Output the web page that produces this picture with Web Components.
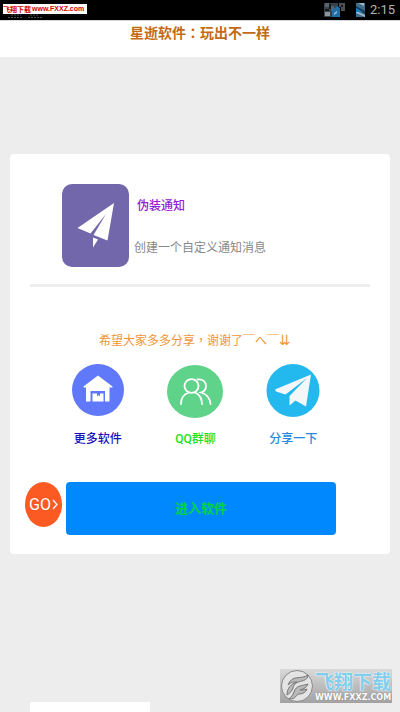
<!DOCTYPE html>
<html lang="zh-CN">
<head>
<meta charset="utf-8">
<meta name="viewport" content="width=device-width, initial-scale=1">
<title>星逝软件</title>
<style>
html, body { margin: 0; height: 100%; }
body { background: #ededed; font-family: Roboto, "Noto Sans CJK SC", sans-serif; font-size: 12px; line-height: 18px; }
.mid { font-family: "Noto Sans CJK TC", sans-serif; }
</style>
</head>
<body>
<star-app></star-app>
<script>
function define(name, html) {
  const template = document.createElement('template');
  template.innerHTML = html;
  customElements.define(name, class extends HTMLElement {
    constructor() {
      super();
      this.attachShadow({ mode: 'open' }).append(template.content.cloneNode(true));
    }
  });
}

define('status-bar', `
<style>
:host { display: flex; align-items: center; justify-content: flex-end; height: 21px; padding: 0 5px; background: #000; color: #b4b4b4; font-size: 13px; border-bottom: 1px solid #d8d8d8; box-sizing: border-box; gap: 5px; position: relative; }
.ghost { position: absolute; left: 8px; top: 14px; }
.notice { margin-right: 5px; }
</style>
<svg class="ghost" width="36" height="5" viewBox="0 0 36 5" fill="none" stroke="#55504d" stroke-dasharray="2 1"><path d="M3 1h10M0 3.5h15M22 1h9M20 3.5h15"/></svg>
<svg class="notice" width="22" height="16" viewBox="0 0 22 16">
<path fill="#35414b" d="M0 1h14v14H0z"/><path fill="#8b969e" d="M1 10h5v4H1z"/><path fill="#59636d" d="M1 1h4v4H1zM7 4h3v5H7z"/><path fill="#1d6fa9" d="M8 8l5-4 3 2v9H8z"/><path fill="#4c5157" d="M15 1h6v8h-4V5h-2z"/><path fill="#15191d" d="M5 2h2v5H5zM1 7h4v2H1zM17 3h2v2h-2z"/><path fill="#93b9d2" d="M10 11l3-2v2l-3 2z"/>
</svg>
<svg width="9" height="14" viewBox="0 0 9 14">
<path fill="#3f6d8c" d="M0 0h9v14H0z"/><path fill="#173b58" d="M0 3l9 5v3L0 6z"/><path fill="#a1bac9" d="M0 8l9 4v2L0 10zM2 0h6v3z"/><path fill="#187fbd" d="M0 5l7 4H0z"/>
</svg>
<time>2:15</time>
`);

define('title-bar', `
<style>
:host { display: block; height: 36px; background: #fff; }
h1 { margin: 0; font-size: 14px; line-height: 22px; font-weight: 700; color: #c46a14; text-align: center; }
</style>
<h1><slot></slot></h1>
`);

define('feature-row', `
<style>
:host { display: flex; gap: 5px; margin: 0 20px; padding: 30px 32px 17px; border-bottom: 3px solid #efefef; }
svg { flex: none; }
div { display: flex; flex-direction: column; gap: 24px; padding-top: 13px; }
h2, p { margin: 0; font-size: 12px; line-height: 18px; }
h2 { font-weight: 500; color: #9420d6; padding-left: 3px; }
p { color: #888; }
</style>
<svg width="67" height="83" viewBox="0 0 67 83" role="img" aria-label="纸飞机">
<rect width="67" height="83" rx="10" fill="#7167aa"/>
<path fill="#fff" d="M52 19L15.500 44 28.500 49.500 44 30 31.500 51 45.500 56.500z"/>
<path fill="#fff" d="M31 53.500L36 55.500 31 63.500z"/>
</svg>
<div><h2><slot name="title"></slot></h2><p><slot></slot></p></div>
`);

define('action-link', `
<style>
:host { display: block; }
a { display: flex; flex-direction: column; align-items: center; gap: 12px; text-decoration: none; color: inherit; font-weight: 500; line-height: 18px; }
</style>
<a href="#"><slot name="icon"></slot><span><slot></slot></span></a>
`);

define('go-button', `
<style>
:host { display: block; flex: none; }
button { width: 37px; height: 45px; border: 0; border-radius: 50%; padding: 0; background: #fb5a23; color: #fff; font: 16px/45px Roboto, sans-serif; display: flex; align-items: center; justify-content: center; gap: 1px; }
</style>
<button type="button"><span>GO</span><svg width="6" height="11" viewBox="0 0 6 11" fill="none" stroke="#fff" stroke-width="1.300" aria-hidden="true"><path d="M1 1l4 4.500L1 10"/></svg></button>
`);

define('enter-button', `
<style>
:host { display: block; flex: 1; }
button { width: 100%; height: 53px; border: 0; border-radius: 4px; padding: 0; background: #0088ff; color: #00d348; font: 700 13px/53px Roboto, "Noto Sans CJK SC", sans-serif; }
</style>
<button type="button"><slot></slot></button>
`);

define('site-tag', `
<style>
:host { position: absolute; left: 3px; top: 4px; display: flex; align-items: center; gap: 1px; width: 84px; height: 10px; background: #fff; color: #d80000; font: 700 7px/10px "Noto Sans CJK SC", sans-serif; white-space: nowrap; }
b { font: 700 7px/10px "Liberation Sans", sans-serif; }
</style>
<span>飞翔下载</span><b>www.FXXZ.com</b>
`);

define('site-mark', `
<style>
:host { position: absolute; right: 8px; bottom: 9px; display: flex; align-items: center; gap: 2px; width: 112px; height: 34px; background: linear-gradient(#d9d9d9, #a2a2a2); white-space: nowrap; }
svg { flex: none; }
div { display: flex; flex-direction: column; }
strong { font: 700 19px/24px "Noto Sans CJK SC", sans-serif; color: #83cdec; text-shadow: 0 0 1px #fff, 0 0 2px #fff; }
small { font: 700 8px/10px "DejaVu Sans", sans-serif; color: #fff; text-shadow: 0 0 1px #777; }
</style>
<svg width="33" height="34" viewBox="0 0 33 34" aria-hidden="true">
<circle cx="17" cy="17" r="15.500" fill="#e4e4e4" stroke="#8a8a8a"/>
<path fill="#b9b9b9" stroke="#777" d="M28 6c-7 5-16-1-20 10 3-3 6-3 9-3-6 2-10 6-10 13 3-2 5-4 6-7 1-5 5-6 9-7 4-1 6-3 6-6z"/>
<path fill="#b9b9b9" stroke="#777" d="M28 15c-6 2-12 1-14 8-1 3-3 5-5 7 8 0 6-4 10-5 4 0 7-2 8-5-3 1-5 1-7 1 4-1 7-3 8-6z"/>
</svg>
<div><strong>飞翔下载</strong><small>WWW.FXXZ.COM</small></div>
`);

define('star-app', `
<style>
:host { display: flex; flex-direction: column; min-height: 100vh; position: relative; overflow: hidden; background: #ededed; }
main { margin: 97px 10px 0; padding-bottom: 19px; border-radius: 4px; background: #fff; }
.mid { font-family: "Noto Sans CJK TC", sans-serif; }
.arrows { font: 14px/16px "DejaVu Sans", sans-serif; }
.hint { height: 20px; margin: 43px 0 0; padding-left: 89px; color: #f09536; line-height: 20px; white-space: pre; }
nav { display: grid; grid-template-columns: repeat(3, 1fr); margin: 14px 48px 0 39px; }
.more { color: #1a10bd; }
.chat { color: #1ee02a; }
.share { color: #2489e0; }
.enter { display: flex; gap: 4px; margin: 34px 54px 0 15px; }
footer { width: 120px; height: 10px; margin: auto 0 0 30px; background: #fff; }
</style>
<status-bar></status-bar>
<title-bar>星逝软件<span class="mid" lang="zh-TW">：</span>玩出不一样</title-bar>
<main>
<feature-row><span slot="title">伪装通知</span>创建一个自定义通知消息</feature-row>
<p class="hint">希望大家多多分享<span class="mid" lang="zh-TW">，</span>谢谢了￣へ￣<span class="arrows">⇊</span></p>
<nav>
<action-link class="more">
<svg slot="icon" width="52" height="54" viewBox="0 0 52 54" aria-hidden="true"><circle cx="26" cy="26" r="26" fill="#6079fb"/><path fill="#fff" d="M26 11.500L40.500 22.500V23.500H37.500V37.500H33V27H18.500V37.500H14V23.500H11.500V22.500z"/><path fill="#fff" d="M20.500 29.500h4.500v3l1.500-1.500 1.500 1.500v-3h3.500v8h-11z"/></svg>更多软件</action-link>
<action-link class="chat">
<svg slot="icon" width="56" height="54" viewBox="0 0 56 54" aria-hidden="true"><ellipse cx="28" cy="27.500" rx="28" ry="26.500" fill="#5fd38a"/><g fill="none" stroke="#fff" stroke-width="1.800" stroke-linecap="round"><ellipse cx="24.500" cy="22" rx="7" ry="6.800"/><path d="M14 40c0-6 3-10 8-11.500M28 28.500c4.500 2 7 6 7 11.500M30.500 15.500c5-1 8.500 2.500 8.500 6.500 0 3-2 5.500-5 6.500 5.500 1.500 9 5.500 9.500 11.500"/></g></svg>QQ群聊</action-link>
<action-link class="share">
<svg slot="icon" width="54" height="54" viewBox="0 0 54 54" aria-hidden="true"><circle cx="27" cy="26.500" r="26.500" fill="#24b9ee"/><path fill="#f4f6f8" d="M45 10.500L9 25.500 10 27.500 19.500 30.500 41 14 23.500 32V41.500L29.500 36.500 40 42.500z"/></svg>分享一下</action-link>
</nav>
<div class="enter"><go-button></go-button><enter-button>进入软件</enter-button></div>
</main>
<footer></footer>
<site-tag></site-tag>
<site-mark></site-mark>
`);
</script>
</body>
</html>
